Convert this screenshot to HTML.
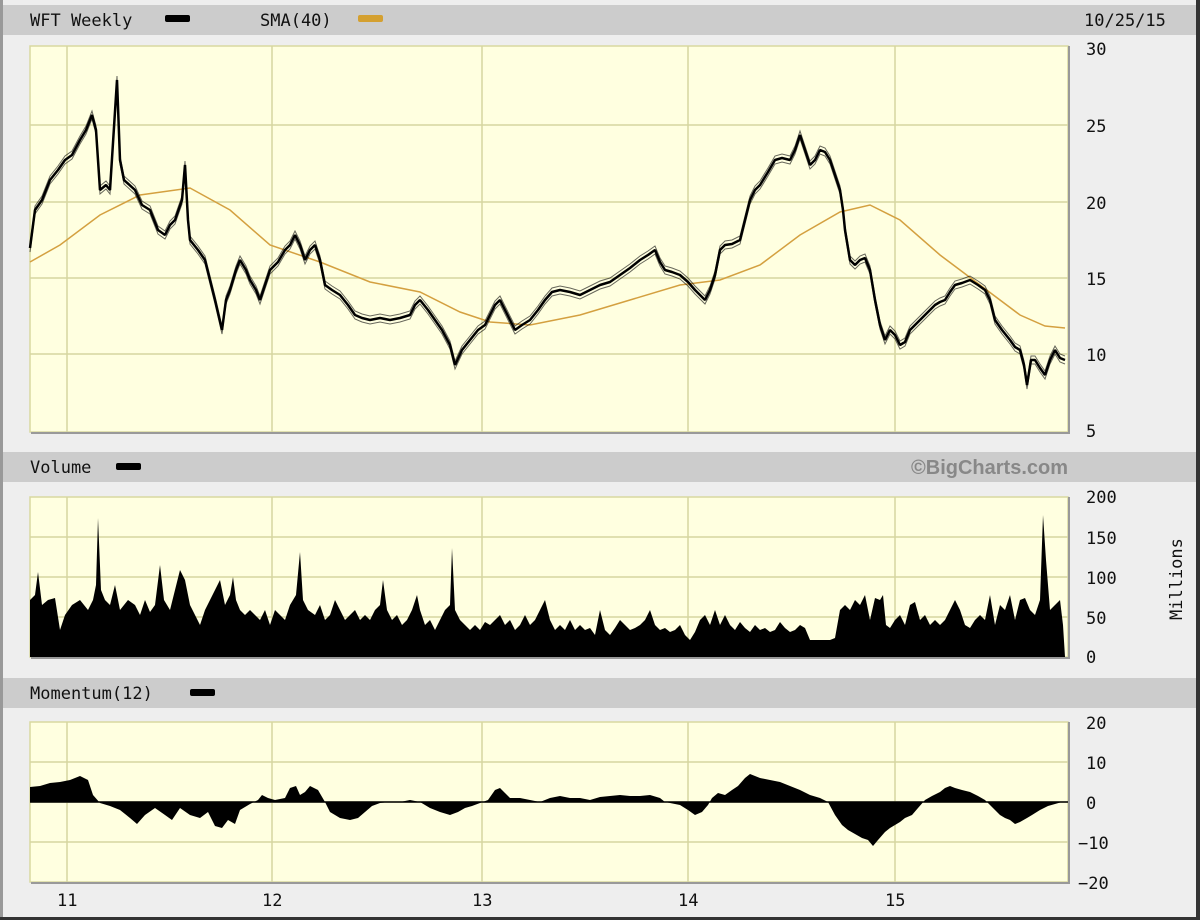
<!DOCTYPE html>
<html><head><style>
html,body{margin:0;padding:0;background:#eee;}
svg{display:block;font-family:"DejaVu Sans Mono","Liberation Mono",monospace;}
</style></head><body>
<svg width="1200" height="920" viewBox="0 0 1200 920" xmlns="http://www.w3.org/2000/svg">
<defs>
<polyline id="pr" fill="none" points="30,248 35,210 42,200 50,180 58,170 65,160 72,155 80,140 86,130 92,115 96,130 100,190 106,185 110,190 117,80 120,160 124,180 135,190 142,205 150,210 158,230 165,235 170,225 175,220 182,200 185,165 188,220 190,240 198,250 205,260 210,280 215,300 222,330 226,300 230,290 236,270 240,260 246,270 250,280 256,290 260,300 265,285 270,270 278,262 285,250 290,245 295,235 300,245 305,260 310,250 315,245 320,260 325,285 332,290 340,295 348,305 355,315 362,318 370,320 380,318 390,320 400,318 410,315 415,305 420,300 428,310 435,320 442,330 450,345 455,365 462,350 470,340 478,330 485,325 490,315 495,305 500,300 505,310 510,320 515,330 522,325 530,320 538,310 545,300 552,292 560,290 570,292 580,295 590,290 600,285 610,282 620,275 630,268 640,260 648,255 655,250 660,262 665,270 672,272 680,275 688,282 695,290 700,295 705,300 710,290 715,275 720,250 725,245 732,244 740,240 745,220 750,200 755,190 760,185 768,172 775,160 782,158 790,160 795,150 800,135 805,150 810,165 815,160 820,150 825,152 830,160 835,175 840,190 843,210 845,230 850,260 855,265 860,260 865,258 870,270 875,300 880,325 885,340 890,330 895,335 900,345 905,342 910,330 915,325 920,320 928,312 935,305 940,302 945,300 950,292 955,285 962,283 970,280 978,285 985,290 990,300 995,320 1002,330 1010,340 1015,347 1020,350 1024,365 1027,385 1031,360 1035,360 1040,368 1045,375 1050,360 1055,350 1060,358 1065,360"/>
</defs>
<rect width="1200" height="920" fill="#eeeeee"/>
<rect x="0" y="0" width="3" height="920" fill="#999"/>
<rect x="1196" y="0" width="4" height="920" fill="#333"/>
<rect x="0" y="917" width="1200" height="3" fill="#333"/>
<rect x="3" y="5" width="1193" height="30" fill="#cccccc"/>
<rect x="3" y="452" width="1193" height="30" fill="#cccccc"/>
<rect x="3" y="678" width="1193" height="30" fill="#cccccc"/>
<g font-size="17" fill="#111">
<text x="30" y="26">WFT Weekly</text>
<rect x="165" y="15" width="25" height="7" rx="2" fill="#000"/>
<text x="260" y="26">SMA(40)</text>
<rect x="358" y="15" width="25" height="7" rx="2" fill="#d4a030"/>
<text x="1084" y="26">10/25/15</text>
<text x="30" y="473">Volume</text>
<rect x="116" y="463" width="25" height="7" rx="2" fill="#000"/>
<text x="30" y="699">Momentum(12)</text>
<rect x="190" y="689" width="25" height="7" rx="2" fill="#000"/>
</g>
<text x="1068" y="474" text-anchor="end" font-family="Liberation Sans,sans-serif" font-weight="bold" font-size="20" fill="#888">©BigCharts.com</text>
<g fill="#ffffe0" stroke="#d8d8a0" stroke-width="1.5">
<rect x="30" y="46" width="1038" height="386"/>
<rect x="30" y="497" width="1038" height="160"/>
<rect x="30" y="722" width="1038" height="160"/>
</g>
<g stroke="#999" stroke-width="2" fill="none">
<path d="M31 433H1069V46"/><path d="M31 658H1069V497"/><path d="M31 883H1069V722"/>
</g>
<g stroke="#d6d6a0" stroke-width="1.5">
<path d="M67 46V432M272 46V432M482 46V432M688 46V432M895 46V432"/>
<path d="M67 497V657M272 497V657M482 497V657M688 497V657M895 497V657"/>
<path d="M67 722V882M272 722V882M482 722V882M688 722V882M895 722V882"/>
<path d="M30 125H1068M30 202H1068M30 278H1068M30 354H1068"/>
<path d="M30 537H1068M30 577H1068M30 617H1068"/>
<path d="M30 762H1068M30 802H1068M30 842H1068"/>
</g>
<g font-size="17" fill="#111">
<text x="1086" y="55">30</text><text x="1086" y="132">25</text><text x="1086" y="209">20</text>
<text x="1086" y="285">15</text><text x="1086" y="361">10</text><text x="1086" y="437">5</text>
<text x="1086" y="503">200</text><text x="1086" y="544">150</text><text x="1086" y="584">100</text>
<text x="1086" y="624">50</text><text x="1086" y="663">0</text>
<text x="1086" y="729">20</text><text x="1086" y="769">10</text><text x="1086" y="809">0</text>
<text x="1078" y="849">−10</text><text x="1078" y="889">−20</text>
<text x="57" y="906">11</text><text x="262" y="906">12</text><text x="472" y="906">13</text>
<text x="678" y="906">14</text><text x="885" y="906">15</text>
<text transform="translate(1182,620) rotate(-90)">Millions</text>
</g>
<polyline fill="none" stroke="#d4a040" stroke-width="1.5" points="30,262 60,245 100,215 140,195 190,188 230,210 270,245 320,262 370,282 420,292 460,312 490,322 530,325 580,315 630,300 680,285 720,280 760,265 800,235 840,212 870,205 900,220 940,255 980,285 1020,315 1045,326 1065,328"/>
<use href="#pr" stroke="#000" stroke-width="2.5" stroke-linejoin="bevel"/>
<use href="#pr" transform="translate(0,-4)" stroke="#000" stroke-width="1" opacity="0.6"/>
<use href="#pr" transform="translate(0,4)" stroke="#000" stroke-width="1" opacity="0.6"/>
<polygon fill="#000" points="30,657 30,600 35,595 38,572 42,605 48,600 55,598 60,630 65,615 72,605 80,600 88,610 93,600 96,585 98,518 101,590 105,600 110,605 115,585 120,610 128,600 135,605 140,615 145,600 150,612 155,605 160,565 164,600 170,610 175,590 180,570 185,580 190,605 195,615 200,625 205,610 210,600 215,590 220,580 225,605 230,595 233,577 236,600 240,610 245,615 250,610 255,615 260,620 265,610 270,625 275,610 280,615 285,620 290,605 296,595 300,552 303,600 308,610 315,615 320,605 325,620 330,615 335,600 340,610 345,620 350,615 355,610 360,620 365,615 370,620 375,610 380,605 383,580 387,610 392,620 397,615 402,625 407,620 412,610 417,595 420,610 425,625 430,620 435,630 440,620 445,610 450,605 452,548 455,610 460,620 465,625 470,630 475,625 480,630 485,622 490,625 495,620 500,615 505,625 510,620 515,630 520,625 525,615 530,625 535,620 540,610 545,600 550,620 555,630 560,625 565,630 570,620 575,630 580,625 585,630 590,628 595,635 600,610 605,630 610,635 615,628 620,620 625,625 630,630 635,628 640,625 645,620 650,610 655,625 660,630 665,628 670,632 675,630 680,625 685,635 690,640 695,632 700,620 705,615 710,625 715,610 720,625 725,615 730,625 735,630 740,622 745,628 750,632 755,625 760,630 765,628 770,632 775,630 780,622 785,628 790,632 795,630 800,625 805,628 810,640 815,640 820,640 825,640 830,640 835,638 840,610 845,605 850,610 855,600 860,605 865,595 870,620 875,598 880,600 883,595 886,625 890,628 895,620 900,615 905,625 910,605 915,602 920,620 925,615 930,625 935,620 940,625 945,620 950,610 955,600 960,610 965,625 970,628 975,620 980,615 985,620 990,595 995,625 1000,605 1005,610 1010,595 1015,620 1020,600 1025,598 1030,610 1035,615 1040,600 1043,515 1046,560 1050,610 1055,605 1060,600 1063,625 1065,657"/>
<polygon fill="#000" points="30,802 30,787 40,786 50,783 60,782 70,780 80,776 88,780 93,795 100,803 110,806 120,810 130,818 137,824 145,815 155,808 165,815 172,820 180,808 190,815 200,818 208,812 215,826 222,828 228,820 235,824 240,810 250,804 258,800 262,795 268,798 275,800 285,798 290,788 296,786 300,795 305,792 310,786 318,790 325,802 330,812 340,818 350,820 358,818 365,812 372,806 380,803 390,802 400,802 410,800 420,802 430,808 440,812 450,815 458,812 465,808 472,806 480,803 488,800 495,790 500,788 505,793 510,798 520,798 530,800 540,802 550,798 560,796 570,798 580,798 590,800 600,797 610,796 620,795 630,796 640,796 650,795 660,798 665,802 680,805 688,810 695,815 702,812 708,805 712,798 718,793 725,795 732,790 738,786 745,778 750,774 760,778 770,780 780,782 790,786 800,790 810,795 820,798 828,802 835,815 842,825 848,830 855,834 862,838 868,840 873,846 878,840 885,832 890,828 895,825 900,822 905,818 912,815 918,808 925,800 932,796 940,792 945,788 950,786 955,788 962,790 970,792 978,796 985,800 990,805 995,810 1000,815 1005,818 1010,820 1015,824 1020,822 1027,818 1032,815 1040,810 1048,806 1055,804 1062,802 1068,802"/>
<line x1="30" y1="802" x2="1068" y2="802" stroke="#000" stroke-width="1.5"/>
</svg>
</body></html>
